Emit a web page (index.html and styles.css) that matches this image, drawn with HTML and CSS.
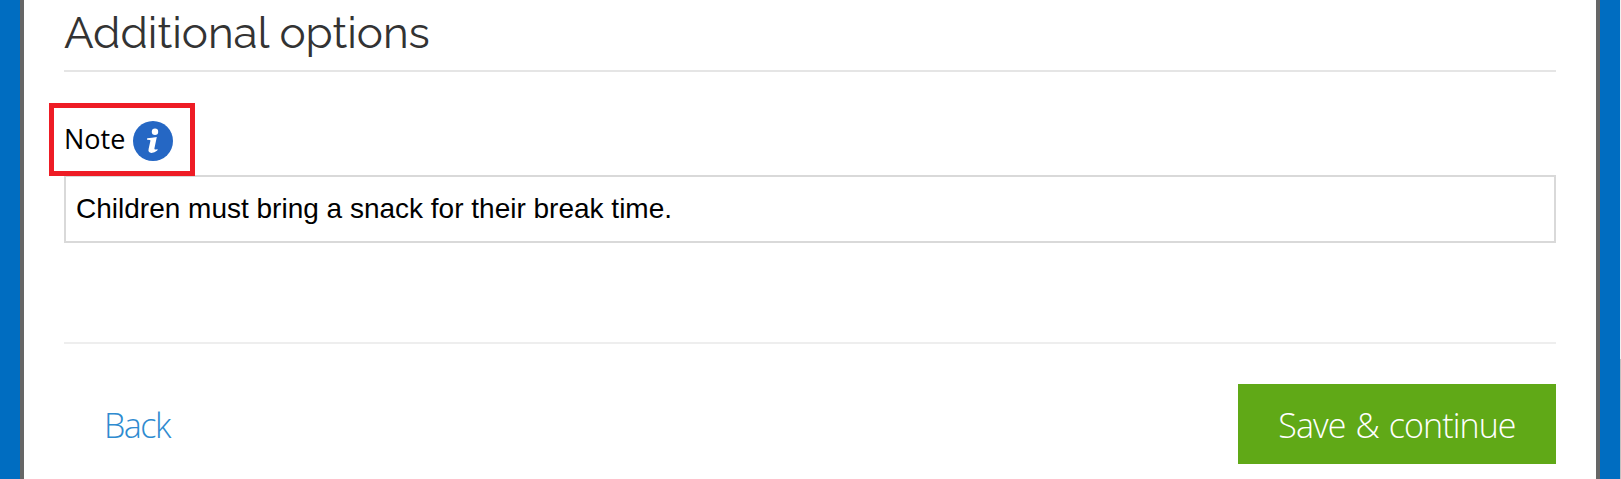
FILE: index.html
```html
<!DOCTYPE html>
<html lang="en">
<head>
  <meta charset="UTF-8" />
  <title>Additional options</title>
  <meta name="viewport" content="width=device-width, initial-scale=1.0" />
  <link rel="stylesheet" href="styles.css">
</head>
<body>
  <main class="panel">
    <h2 class="title">Additional options</h2>

    <div class="field">
      <label class="field-label" for="note">
        <span class="label-text">Note</span>
        <svg class="info" viewBox="0 0 40 40" width="40" height="40">
          <circle cx="20" cy="20" r="20" fill="#2567c4"/>
          <circle cx="22" cy="10.7" r="3.2" fill="#fff"/>
          <path d="M14.2 17.2 Q19 16.9 23.8 15.9 L21.4 27.4 Q21.1 29.4 24.6 27.9 L24.3 29.5 Q21.5 31.9 18.4 31.9 Q14.8 31.7 15.6 28 L17.5 19.6 Q17.6 18.7 14 18.8 Z" fill="#fff"/>
        </svg>
        <span class="highlight"></span>
      </label>
      <input class="input" id="note" type="text" value="Children must bring a snack for their break time.">
    </div>

    <div class="actions">
      <a class="back" href="#">Back</a>
      <button class="save" type="button">Save &amp; continue</button>
    </div>
  </main>
  <div class="scroll-edge"><div class="scroll-thumb"></div></div>
</body>
</html>
```
FILE: styles.css
```css
* {
  box-sizing: border-box;
}

body {
  display: flex;
  justify-content: space-between;
  margin: 0;
  background: #006dc1;
  font-family: "Open Sans", "Noto Sans", sans-serif;
  overflow: hidden;
}

.panel {
  width: 1580px;
  height: 479px;
  margin-left: 20px;
  padding: 0 40px;
  background: #fff;
  border-left: 4px solid #666;
  border-right: 4px solid #666;
}

.title {
  height: 72px;
  margin: 0;
  padding-top: 7px;
  border-bottom: 2px solid #e5e5e5;
  font-family: Raleway, Lato, sans-serif;
  font-size: 44px;
  font-weight: 400;
  line-height: 52px;
  color: #333;
}

.field {
  padding-top: 31px;
}

.field-label {
  position: relative;
  display: flex;
  width: 130px;
  height: 72px;
  padding-top: 18px;
  font-size: 27px;
  line-height: 36px;
  color: #000;
}

.info {
  margin-left: auto;
  margin-right: 21px;
}

/* red frame round the label */
.highlight {
  position: absolute;
  left: -15px;
  top: 0;
  width: 146px;
  height: 73px;
  border: 5px solid #ee1c25;
}

.input {
  display: block;
  width: 100%;
  height: 68px;
  padding: 0 10px 1px;
  border: 2px solid #d9d9d9;
  background: #fff;
  font-family: "Liberation Sans", Arial, sans-serif;
  font-size: 28px;
  color: #000;
}

.actions {
  display: flex;
  justify-content: space-between;
  margin-top: 99px;
  padding-top: 40px;
  border-top: 2px solid #eee;
}

.back,
.save {
  height: 80px;
  padding: 0 40px;
  font-size: 34px;
  font-weight: 300;
  line-height: 82px;
  letter-spacing: -0.9px;
  word-spacing: 2px;
}

.back {
  color: #2e8bd0;
  text-decoration: none;
  letter-spacing: -1.5px;
}

.save {
  width: 318px;
  padding: 0;
  border: 0;
  background: #60a917;
  color: #fff;
  font-family: inherit;
  white-space: nowrap;
}

.scroll-edge {
  width: 1px;
  height: 479px;
  padding-top: 359px;
  background: #f1f1f1;
}

.scroll-thumb {
  height: 120px;
  background: #c1c1c1;
}
```
